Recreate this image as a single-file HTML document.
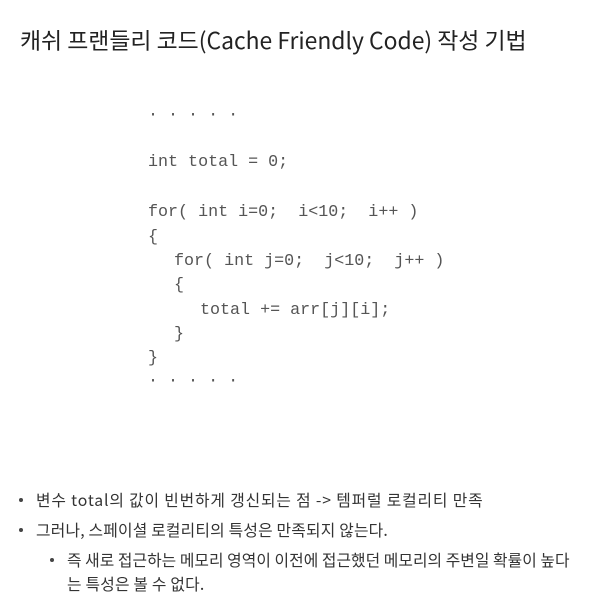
<!DOCTYPE html>
<html><head><meta charset="utf-8"><style>
body{margin:0;width:600px;height:604px;background:#fff;position:relative;overflow:hidden;font-family:"Noto Sans CJK KR",sans-serif;color:#222}
.t{position:absolute;left:20px;top:23px;font-size:22.9px;white-space:nowrap;color:#222;line-height:32px}
.c{position:absolute;font-family:"Liberation Mono",monospace;font-size:16.7px;color:#555;white-space:pre;line-height:20px}
.b{position:absolute;font-size:15.8px;letter-spacing:0.2px;color:#333;white-space:nowrap;line-height:20px}
.d{position:absolute;width:4px;height:4px;border-radius:2px;background:#444}
</style></head><body>
<div class="t">캐쉬 프랜들리 코드(Cache Friendly Code) 작성 기법</div>
<div class="c" style="left:148px;top:106px">· · · · ·</div>
<div class="c" style="left:148px;top:153px">int total = 0;</div>
<div class="c" style="left:148px;top:203px">for( int i=0;  i&lt;10;  i++ )</div>
<div class="c" style="left:148px;top:228px">{</div>
<div class="c" style="left:174px;top:252px">for( int j=0;  j&lt;10;  j++ )</div>
<div class="c" style="left:174px;top:276px">{</div>
<div class="c" style="left:200px;top:301px">total += arr[j][i];</div>
<div class="c" style="left:174px;top:325px">}</div>
<div class="c" style="left:148px;top:349px">}</div>
<div class="c" style="left:148px;top:372px">· · · · ·</div>
<div class="d" style="left:19px;top:498px"></div>
<div class="b" style="left:36px;top:490px;letter-spacing:0.85px">변수 total의 값이 빈번하게 갱신되는 점 -&gt; 템퍼럴 로컬리티 만족</div>
<div class="d" style="left:19px;top:528px"></div>
<div class="b" style="left:36px;top:520px">그러나, 스페이셜 로컬리티의 특성은 만족되지 않는다.</div>
<div class="d" style="left:50px;top:558px"></div>
<div class="b" style="left:67px;top:550px;letter-spacing:0.05px">즉 새로 접근하는 메모리 영역이 이전에 접근했던 메모리의 주변일 확률이 높다</div>
<div class="b" style="left:67px;top:574px">는 특성은 볼 수 없다.</div>
</body></html>
